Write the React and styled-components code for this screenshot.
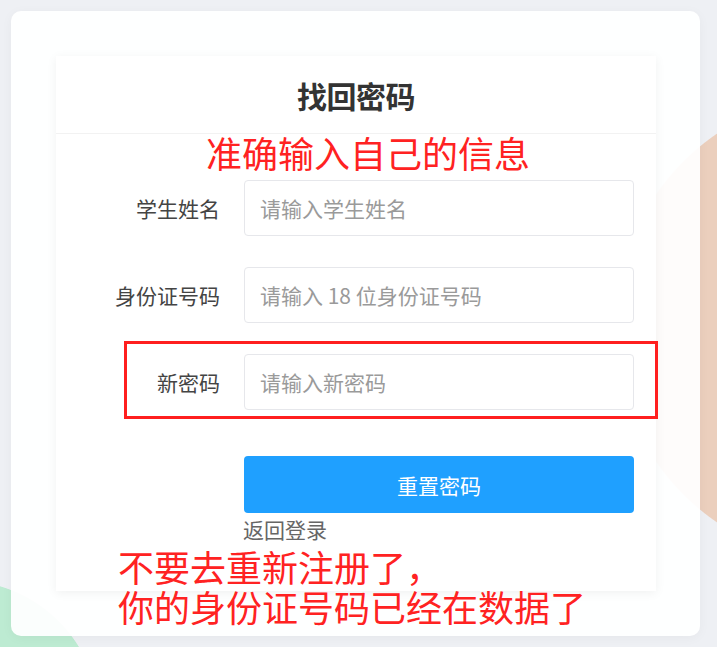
import React, { useState } from "react";
import styled, { createGlobalStyle } from "styled-components";

const GlobalStyle = createGlobalStyle`
  html, body {
    margin: 0;
    padding: 0;
  }
  body {
    font-family: "Noto Sans CJK SC", "Noto Sans", sans-serif;
    color: #333;
  }
  * {
    box-sizing: border-box;
  }
`;

//page with the two faint background circles
const Page = styled.div`
  width: 717px;
  height: 647px;
  padding: 11px 17px 11px 11px;
  overflow: hidden;
  background:
    radial-gradient(circle 236px at 850px 328px, #ebcfbd 99.6%, transparent 100%),
    radial-gradient(circle 140px at -40px 720px, #bdebd2 99.4%, transparent 100%),
    #eef0f4;
`;

const Card = styled.div`
  position: relative;
  width: 689px;
  height: 625px;
  padding: 45px 44px 0 45px;
  border-radius: 10px;
  background: rgba(255, 255, 255, 0.94);
  box-shadow: 0 2px 12px rgba(0, 0, 0, 0.04);
`;

const Panel = styled.div`
  width: 600px;
  height: 535px;
  background: #fff;
  box-shadow: 0 2px 10px rgba(0, 0, 0, 0.06);
`;

const Header = styled.div`
  height: 78px;
  display: flex;
  align-items: center;
  justify-content: center;
  border-bottom: 1px solid #f2f2f2;
`;

const Title = styled.h2`
  margin: 0;
  font-size: 30px;
  font-weight: 700;
  color: #333;
  letter-spacing: -0.5px;
`;

const Form = styled.form`
  display: flex;
  flex-direction: column;
  padding: 46px 22px 0 0;
`;

const Fields = styled.div`
  display: flex;
  flex-direction: column;
  gap: 31px;
`;

const Row = styled.div`
  display: flex;
  align-items: center;
`;

const Label = styled.label`
  width: 164px;
  margin-right: 24px;
  text-align: right;
  font-size: 21px;
  color: #444;
`;

const Input = styled.input`
  width: 390px;
  height: 56px;
  padding: 0 15px;
  border: 1px solid #e6e7eb;
  border-radius: 4px;
  font-family: inherit;
  font-size: 21px;
  color: #333;
  outline: none;
  &::placeholder {
    color: #9a9a9a;
  }
`;

const Actions = styled.div`
  display: flex;
  flex-direction: column;
  align-items: flex-start;
  padding-left: 188px;
  margin-top: 46px;
`;

const Submit = styled.button`
  width: 390px;
  height: 57px;
  border: none;
  border-radius: 4px;
  background: #1fa0ff;
  color: #fff;
  font-family: inherit;
  font-size: 21px;
  cursor: pointer;
`;

const BackLink = styled.a`
  margin-top: 2px;
  margin-left: -1px;
  font-size: 21px;
  line-height: 28px;
  color: #666;
  text-decoration: none;
  cursor: pointer;
`;

//red annotations drawn over the screenshot
const Note = styled.div`
  position: absolute;
  left: ${p => p.left}px;
  top: ${p => p.top}px;
  font-size: 36px;
  line-height: 36px;
  color: #ff2222;
  white-space: nowrap;
  pointer-events: none;
`;

const Highlight = styled.div`
  position: absolute;
  left: 113px;
  top: 330px;
  width: 534px;
  height: 78px;
  border: 3px solid #ff1f1f;
  pointer-events: none;
`;

const fields = [
  { name: "name", label: "学生姓名", placeholder: "请输入学生姓名", type: "text" },
  { name: "idcard", label: "身份证号码", placeholder: "请输入 18 位身份证号码", type: "text" },
  { name: "password", label: "新密码", placeholder: "请输入新密码", type: "password" },
];

const App = () => {
  const [formState, setFormState] = useState({ name: "", idcard: "", password: "" });

  const inputChange = e => {
    setFormState({ ...formState, [e.target.name]: e.target.value });
  };

  const formSubmit = e => {
    e.preventDefault();
  };

  return (
    <>
      <GlobalStyle />
      <Page>
        <Card>
          <Panel>
            <Header>
              <Title>找回密码</Title>
            </Header>
            <Form onSubmit={formSubmit}>
              <Fields>
                {fields.map(f => (
                  <Row key={f.name}>
                    <Label htmlFor={f.name}>{f.label}</Label>
                    <Input
                      id={f.name}
                      name={f.name}
                      type={f.type}
                      placeholder={f.placeholder}
                      value={formState[f.name]}
                      onChange={inputChange}
                    />
                  </Row>
                ))}
              </Fields>
              <Actions>
                <Submit type="submit">重置密码</Submit>
                <BackLink>返回登录</BackLink>
              </Actions>
            </Form>
          </Panel>
          <Note left={195} top={123}>准确输入自己的信息</Note>
          <Highlight />
          <Note left={107} top={537}>不要去重新注册了，</Note>
          <Note left={107} top={577}>你的身份证号码已经在数据了</Note>
        </Card>
      </Page>
    </>
  );
};

export default App;
